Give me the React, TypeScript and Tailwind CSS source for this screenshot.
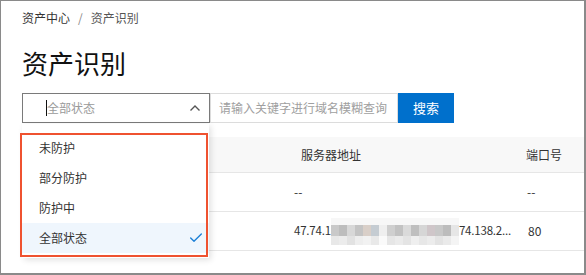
import { Check } from "lucide-react";

const font = { fontFamily: '"Noto Sans CJK SC", "Noto Sans", sans-serif' };

const options = ["未防护", "部分防护", "防护中", "全部状态"];

// mosaic cells of the masked IP (mid band + low band)
const midCells = [
  "bg-[#c9c9c9]", "bg-[#bdbdbd]", "bg-[#d8d8d8]", "bg-[#c4c4c4]", "bg-[#d9cfc8]", "bg-[#c5ccd2]",
  "bg-[#efefef]", "bg-[#cfcfcf]", "bg-[#c2c2c2]", "bg-[#dadada]", "bg-[#bfbfbf]", "bg-[#d6d6d6]",
  "bg-[#cfc6c9]", "bg-[#c8c8c8]", "bg-[#bcbcbc]", "bg-[#e6e6e6]",
];
const lowCells = [
  "bg-[#e8e8e8]", "bg-[#ececec]", "bg-[#e2e2e2]", "bg-[#eeeeee]", "bg-[#f2f2f2]", "bg-[#e9e9e9]",
  "bg-[#fafafa]", "bg-[#e6e6e6]", "bg-[#ebebeb]", "bg-[#e4e4e4]", "bg-[#efefef]", "bg-[#e7e7e7]",
  "bg-[#ececec]", "bg-[#e3e3e3]", "bg-[#eaeaea]", "bg-[#f4f4f4]",
];

function Mosaic() {
  return (
    <span className="inline-flex flex-col w-[128px] h-[27px] align-middle">
      <span className="h-[7px] bg-[#f7f7f7]" />
      <span className="flex h-[11px]">
        {midCells.map((c, i) => (
          <span key={i} className={`w-[8px] h-full ${c}`} />
        ))}
      </span>
      <span className="flex h-[9px]">
        {lowCells.map((c, i) => (
          <span key={i} className={`w-[8px] h-full ${c}`} />
        ))}
      </span>
    </span>
  );
}

export default function App() {
  return (
    <div
      style={font}
      className="relative w-[586px] h-[275px] overflow-hidden bg-white border-t border-l border-r-2 border-b-2 border-[#8a8a8a] text-[#333]"
    >
      <div className="pl-[21px]">
        {/* breadcrumb */}
        <div className="mt-[7px] flex items-center text-xs leading-[20px] text-[#333]">
          <span>资产中心</span>
          <span className="mx-[8px] text-[#888]">/</span>
          <span className="text-[#555]">资产识别</span>
        </div>

        <h1 className="mt-[17px] text-[26px] leading-[36px] text-[#111]">资产识别</h1>

        {/* filter bar */}
        <div className="mt-[12px] flex h-[30px]">
          <div className="relative w-[188px] h-full">
            <div className="flex items-center h-full border border-[#7a7a7a] bg-white">
              <span className="ml-[23px] w-px h-[16px] bg-[#111]" />
              <span className="text-xs text-[#9a9a9a]">全部状态</span>
              <svg className="ml-auto mr-[8px]" width="12" height="8" viewBox="0 0 12 8">
                <path d="M1.5 6.5 L6 2 L10.5 6.5" fill="none" stroke="#555" strokeWidth="1.4" />
              </svg>
            </div>

            {/* dropdown */}
            <div className="absolute left-0 top-[31px] z-10 w-[187px] bg-white pt-[9px] pb-[5px] shadow-[2px_2px_6px_rgba(0,0,0,0.12)]">
              {options.map((o, i) => {
                const active = i === options.length - 1;
                return (
                  <div
                    key={o}
                    className={`flex items-center h-[30px] pl-[17px] pr-[5px] text-xs text-[#333] ${
                      active ? "bg-[#eff6fd]" : ""
                    }`}
                  >
                    <span>{o}</span>
                    {active && <Check className="ml-auto" size={16} strokeWidth={2} color="#1a7fd6" />}
                  </div>
                );
              })}
              {/* annotation box */}
              <div className="absolute left-[-2px] top-[9px] w-[188px] h-[124px] border-2 border-[#ef5230] pointer-events-none" />
            </div>
          </div>

          <div className="flex items-center w-[188px] h-full border border-[#dcdcdc] pl-[8px] text-xs text-[#a0a0a0]">
            请输入关键字进行域名模糊查询
          </div>
          <button className="w-[56px] h-full bg-[#0070cc] text-[13px] text-white">搜索</button>
        </div>

        {/* table */}
        <div className="mt-[14px] w-[600px] text-xs">
          <div className="flex h-[36px] items-center bg-[#f8f8f8] border-b border-[#e6e6e6]">
            <div className="w-[279px]" />
            <div className="w-[225px]">服务器地址</div>
            <div>端口号</div>
          </div>
          <div className="flex h-[39px] items-center border-b border-[#e6e6e6]">
            <div className="w-[272px]" />
            <div className="w-[233px]">--</div>
            <div>--</div>
          </div>
          <div className="flex h-[39px] items-center border-b border-[#e6e6e6]">
            <div className="w-[272px]" />
            <div className="w-[234px] flex items-center whitespace-nowrap text-[11.5px] tracking-[-0.2px]">
              <span>47.74.1</span>
              <Mosaic />
              <span>74.138.2...</span>
            </div>
            <div>80</div>
          </div>
        </div>
      </div>
    </div>
  );
}
